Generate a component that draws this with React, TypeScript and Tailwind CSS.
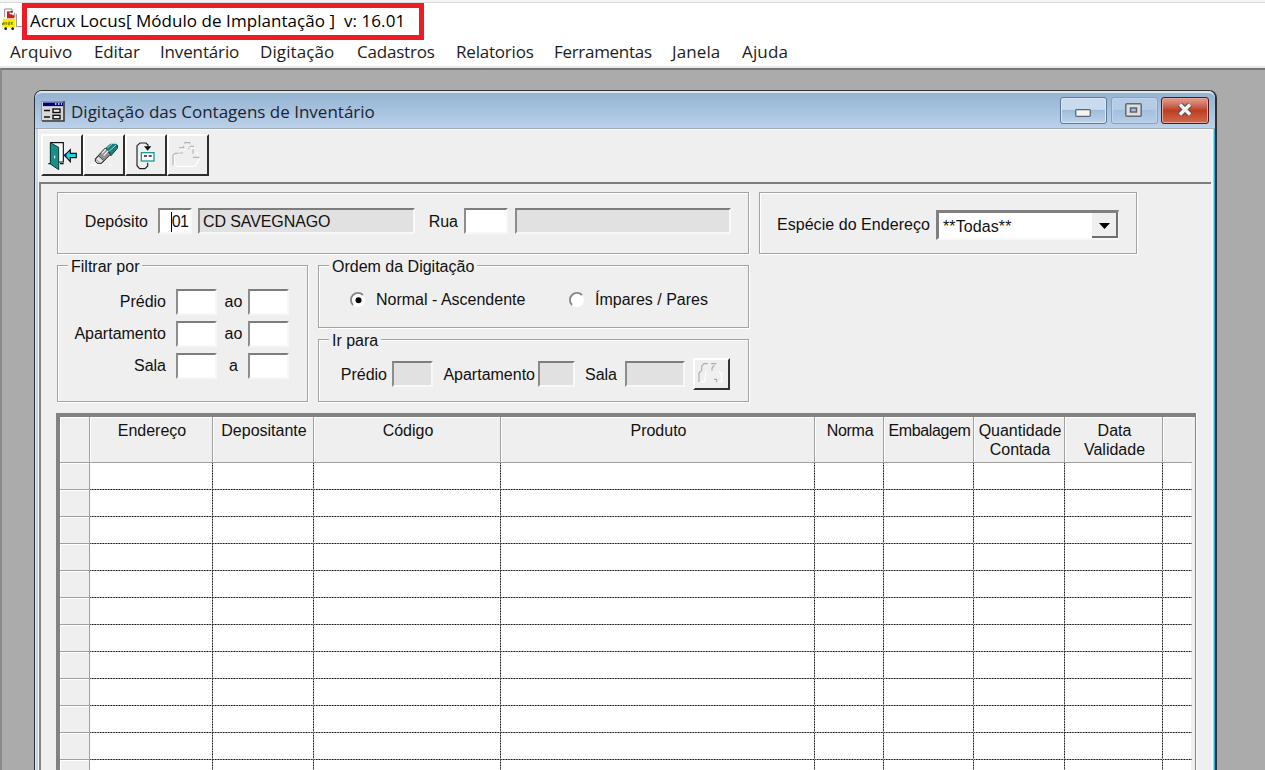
import type { ReactNode } from "react";

const menuItems = [
  { label: "Arquivo", className: "w-[84px] tracking-[0.1px]" },
  { label: "Editar", className: "w-[66px] tracking-[-0.15px]" },
  { label: "Inventário", className: "w-[100px] tracking-[-0.15px]" },
  { label: "Digitação", className: "w-[97px] tracking-[0.1px]" },
  { label: "Cadastros", className: "w-[99px] tracking-[-0.2px]" },
  { label: "Relatorios", className: "w-[98px] tracking-[-0.2px]" },
  { label: "Ferramentas", className: "w-[118px] tracking-[-0.3px]" },
  { label: "Janela", className: "w-[70px] tracking-[0.1px]" },
  { label: "Ajuda", className: "w-[60px] tracking-[0.15px]" },
];

const columns = [
  { name: "" },
  { name: "Endereço" },
  { name: "Depositante" },
  { name: "Código" },
  { name: "Produto" },
  { name: "Norma", className: "tracking-[-0.3px]" },
  { name: "Embalagem", className: "tracking-[-0.35px]" },
  { name: "Quantidade\nContada" },
  { name: "Data\nValidade" },
  { name: "" },
];
const gridTemplate = "grid grid-cols-[30px_123px_101px_187px_314px_69px_90px_91px_98px_29px]";
const rowCount = 12;

function AppIcon() {
  return (
    <svg className="h-6 w-5 shrink-0" viewBox="6 21 60 72">
      <path d="M14 52V27h22v10M40 44v10M49 42v38h17M44 38v14" fill="none" stroke="#8d8d93" strokeWidth="3" />
      <path d="M21 34h8v9h6l8 5v7H21z" fill="#e3141d" />
      <path d="M31 33h7v5h-7z" fill="#3a2020" />
      <path d="M9 56h36v26H7V66z" fill="#f7ef08" />
      <path d="M11 66v8M15 66v8M20 66v8M25 66h4v4h-4v4h5M34 66v8M39 66l-4 4 4 4" fill="none" stroke="#4b4708" strokeWidth="2" />
      <circle cx="17" cy="86" r="4" fill="#111" />
      <circle cx="38" cy="86" r="4" fill="#111" />
      <circle cx="8" cy="72" r="2" fill="#222" />
    </svg>
  );
}

function FormIcon() {
  return (
    <svg className="h-[21px] w-6 shrink-0" viewBox="0 0 24 21">
      <rect width="24" height="21" fill="#d9d9d9" />
      <path d="M23 0v20H1" fill="none" stroke="#333" strokeWidth="1.6" />
      <path d="M.5 20V.5H22" fill="none" stroke="#8a93a0" />
      <rect x="2" y="1.5" width="20" height="3.6" fill="#000080" />
      <path d="M14 3h1.500M17 3h1.500M20 3h1" stroke="#fff" strokeWidth="1.300" />
      <path d="M3 9.500h6M3 16h6" stroke="#111" strokeWidth="1.600" />
      <rect x="12" y="8" width="7" height="3.500" fill="#eee" stroke="#111" strokeWidth="1.400" />
      <rect x="12" y="14.300" width="7" height="3.500" fill="#eee" stroke="#111" strokeWidth="1.400" />
    </svg>
  );
}

function ToolButton({ children }: { children: ReactNode }) {
  return (
    <button className="h-[42px] w-[42px] border-2 border-t-white border-r-[#2e2e2e] border-b-[#2e2e2e] border-l-white bg-[#efefef]">
      {children}
    </button>
  );
}

function ExitIcon() {
  return (
    <svg className="h-[38px] w-[38px]" viewBox="39 153 114 114">
      <path d="M62 173h38v58H62z" fill="#fff" stroke="#111" strokeWidth="3.500" />
      <path d="M55 236h12M90 236h11" stroke="#111" strokeWidth="3.500" />
      <path d="M61 173l25 14v67l-25-17z" fill="#1d8d88" stroke="#063c3a" strokeWidth="3" />
      <path d="M74 212v8" stroke="#fff" strokeWidth="3" />
      <path d="M104 211l17-17v11h18v13h-18v12z" fill="#16d8e4" stroke="#111" strokeWidth="3.500" />
      <path d="M101 211l8-8v16z" fill="#10107c" />
    </svg>
  );
}

function EraserIcon() {
  return (
    <svg className="h-[38px] w-[38px]" viewBox="166 153 114 114">
      <path d="M182 240h28M238 239h8" stroke="#fff" strokeWidth="4" />
      <path d="M227 189l15-13h18l3 4v8l-21 25z" fill="#167f7c" />
      <path d="M233 189l14-12M239 198l20-18" stroke="#b9e6e4" strokeWidth="2.500" />
      <path d="M263 180v10l-20 23" fill="none" stroke="#0c2c2c" strokeWidth="3" />
      <path d="M197 221l30-32 15 19-26 27h-13l-6-6z" fill="#909090" stroke="#222" strokeWidth="3" />
      <path d="M216 206l13-14M222 212l14-15" stroke="#eee" strokeWidth="4" />
      <path d="M198 222l9-9 15 14-8 8h-10l-6-6z" fill="#e4e4e4" stroke="#333" strokeWidth="2.500" />
      <path d="M200 224l11 9" stroke="#777" strokeWidth="2" />
    </svg>
  );
}

function JumpIcon() {
  return (
    <svg className="h-[38px] w-[38px]" viewBox="293 153 114 114">
      <path d="M356 186v-6l-6-6h-18l-9 8v60l8 9h16l8-8v-10" fill="none" stroke="#222" strokeWidth="3.500" />
      <path d="M344 184h22l-11 13z" fill="#111" />
      <rect x="336" y="203" width="38" height="25" fill="#fff" stroke="#1c9a9a" strokeWidth="4" />
      <path d="M344 213h9M358 213h9" stroke="#222" strokeWidth="4" />
      <path d="M331 212v10" stroke="#fff" strokeWidth="3" />
    </svg>
  );
}

function DisabledIcon() {
  return (
    <svg className="h-[38px] w-[38px]" viewBox="418 153 114 114">
      <path d="M435 244v-34M453 193h13M484 190h10M502 200v10" fill="none" stroke="#fff" strokeWidth="3" />
      <path d="M438 244h58l14-22" fill="none" stroke="#fff" strokeWidth="4" />
      <path d="M430 241v-30l7-6h9M449 204h11M449 188h13v-6M463 175l4-2h13v3M480 184h13M490 193v13M490 217h19M477 188v5" fill="none" stroke="#b5b5b5" strokeWidth="3.500" />
    </svg>
  );
}

function Group({ title, className, children }: { title?: string; className: string; children: ReactNode }) {
  return (
    <section className={`relative border border-[#a3a3a3] shadow-[1px_1px_0_#fff,inset_1px_1px_0_#fff] ${className}`}>
      {title && <h2 className="absolute -top-[9px] left-[10px] bg-[#efefef] px-[3px] leading-[19px]">{title}</h2>}
      {children}
    </section>
  );
}

function Field({ className, disabled, children }: { className: string; disabled?: boolean; children?: ReactNode }) {
  return (
    <div
      className={`h-[26px] shrink-0 border-2 border-t-[#7d7d7d] border-r-[#f8f8f8] border-b-[#f8f8f8] border-l-[#8c8c8c] leading-[24px] ${disabled ? "bg-[#e1e1e1]" : "bg-white"} ${className}`}
    >
      {children}
    </div>
  );
}

function Radio({ checked }: { checked?: boolean }) {
  return (
    <svg className="size-4 shrink-0" viewBox="0 0 16 16">
      <circle cx="8" cy="8" r="7" fill="#fff" />
      <path d="M3 13A7 7 0 0 1 13 3" fill="none" stroke="#858585" strokeWidth="1.800" />
      {checked && <circle cx="8.500" cy="8.300" r="3" fill="#000" />}
    </svg>
  );
}

function FilterRow({ label, joiner }: { label: string; joiner: string }) {
  return (
    <div className="flex h-[26px] items-center">
      <span className="w-[118px] pr-[10px] text-right leading-[22px]">{label}</span>
      <Field className="w-[41px]" />
      <span className="w-[31px] pl-[2px] text-center leading-[22px]">{joiner}</span>
      <Field className="w-[41px]" />
    </div>
  );
}

function WindowButtons() {
  return (
    <div className="flex">
      <button className="mr-[4px] flex h-[27px] w-[47px] items-center justify-center rounded-[3px] border border-[#5d7897] bg-linear-to-b from-[#c9dcee] from-45% via-[#9fbddb] via-50% to-[#bcd3ea] pr-[2px] shadow-[inset_0_0_0_1px_#dce9f5]">
        <svg className="mt-[4px] h-2 w-4" viewBox="0 0 16 8">
          <rect x=".7" y=".7" width="14.600" height="6.600" rx="1" fill="#f3f3f3" stroke="#5d6670" strokeWidth="1.300" />
        </svg>
      </button>
      <button className="mr-[3px] flex h-[27px] w-[47px] items-center justify-center rounded-[3px] border border-[#86a2c0] bg-linear-to-b from-[#b4cce4] from-45% via-[#a3c0df] via-50% to-[#b5cee8] pr-[2px] shadow-[inset_0_0_0_1px_#bfd4ea]">
        <svg className="-mt-[2px] h-[14px] w-[17px]" viewBox="0 0 17 14">
          <rect x=".8" y=".8" width="15.400" height="12.400" rx="1" fill="#dedede" stroke="#626a72" strokeWidth="1.500" />
          <rect x="5.500" y="5" width="6" height="4" fill="#a7c1dc" stroke="#59636e" strokeWidth="1.500" />
        </svg>
      </button>
      <button className="flex h-[27px] w-[48px] items-center justify-center rounded-[3px] border border-[#54171a] bg-linear-to-b from-[#dd9082] from-10% via-[#bc3d22] via-50% to-[#cf6a4c] shadow-[inset_0_0_0_1px_#e6a899]">
        <svg className="-mt-[2px] h-[13px] w-4" viewBox="0 0 16 13">
          <path d="M3 1.500l10 10M13 1.500l-10 10" stroke="#55505a" strokeWidth="5.600" />
          <path d="M3 1.500l10 10M13 1.500l-10 10" stroke="#f4f4f4" strokeWidth="3.400" />
        </svg>
      </button>
    </div>
  );
}

function CountGrid() {
  return (
    <div className="-ml-px w-[1141px] shrink-0 overflow-hidden border-r border-white bg-[#efefef]">
      <div className="flex h-full flex-col border-t-[4px] border-r border-l-[4px] border-t-[#828282] border-r-[#858585] border-l-[#828282] pr-[4px]">
        <div className={`${gridTemplate} h-[46px] shrink-0 text-center leading-[19px]`}>
          {columns.map((column, i) => (
            <div
              key={i}
              className={`flex justify-center border-r border-b border-[#a0a0a0] pt-[4px] pl-[2px] whitespace-pre shadow-[inset_1px_1px_0_#fff] last:border-r-0 ${column.className ?? ""}`}
            >
              {column.name}
            </div>
          ))}
        </div>
        {Array.from({ length: rowCount }, (_, r) => (
          <div key={r} className={`${gridTemplate} h-[27px] shrink-0 bg-white`}>
            {columns.map((_, c) =>
              c === 0 ? (
                <div key={c} className="border-r border-b border-[#a0a0a0] bg-[#efefef] shadow-[inset_1px_1px_0_#fff]" />
              ) : (
                <div
                  key={c}
                  className={
                    c === columns.length - 1
                      ? "[background:repeating-linear-gradient(90deg,#000_0,#bbb_1.33px,#000_2.67px)_bottom/100%_1px_no-repeat]"
                      : "[background:repeating-linear-gradient(90deg,#000_0,#bbb_1.33px,#000_2.67px)_bottom/100%_1px_no-repeat,repeating-linear-gradient(180deg,#000_0,#bbb_1.33px,#000_2.67px)_right/1px_100%_no-repeat]"
                  }
                />
              ),
            )}
          </div>
        ))}
      </div>
    </div>
  );
}

export default function App() {
  return (
    <div className="flex h-[770px] w-[1265px] flex-col overflow-hidden bg-white font-['Liberation_Sans',sans-serif] text-[16px] text-[#111]">
      <div className="h-[3px] shrink-0 border-b border-[#d9dbde] bg-[#f3f4f6]" />
      <header className="flex h-[37px] shrink-0 font-['Open_Sans',sans-serif] text-[17px] text-black">
        <div className="w-[22px] pt-[4px] pl-[2px]">
          <AppIcon />
        </div>
        <h1 className="h-[37px] w-[402px] border-[5px] border-[#ed1c24] pl-[3px] leading-[26px] tracking-[0.05px] whitespace-pre">
          {"Acrux Locus[ Módulo de Implantação ]  v: 16.01"}
        </h1>
      </header>
      <nav className="flex h-[28px] shrink-0 border-b-2 border-[#e9e9e9] pl-[10px] font-['Open_Sans',sans-serif] text-[17px] leading-[24px] text-[#1c1c1c]">
        {menuItems.map((m) => (
          <span key={m.label} className={m.className}>
            {m.label}
          </span>
        ))}
      </nav>

      <main className="flex min-h-0 grow border-t-2 border-l-2 border-t-[#767676] border-l-[#8a8a8a] bg-[#ababab] pt-[20px] pl-[32px]">
        <div className="flex h-[690px] w-[1183px] flex-col rounded-t-[8px] border-t border-r-2 border-l border-[#2c3236] bg-[#b9d0e9]">
          <div className="flex h-[38px] shrink-0 rounded-t-[7px] border-t-2 border-b border-t-[#dce8ee] border-b-[#a2adb9] bg-linear-to-b from-[#94b3d2] to-[#bbd1ea] pr-[6px] pl-[6px]">
            <div className="pt-[8px]">
              <FormIcon />
            </div>
            <h2 className="grow pl-[6px] font-['Open_Sans',sans-serif] text-[17px] leading-[37px] text-[#1a2430]">Digitação das Contagens de Inventário</h2>
            <div className="pt-[4px]">
              <WindowButtons />
            </div>
          </div>

          <div className="flex min-h-0 grow border-r border-l border-r-[#22b2d8] border-l-[#d9e6f3]">
            <div className="flex min-h-0 grow flex-col border-r border-l-2 border-r-[#9bd5ee] border-l-[#c3d5e8]">
              <div className="flex min-h-0 grow flex-col border-r-2 border-l border-r-[#f3f7fa] border-l-[#f6f6f6] bg-[#efefef]">
                <div className="flex h-[53px] shrink-0 border-t border-[#fafafa] pt-[4px] pl-[2px]">
                  <ToolButton><ExitIcon /></ToolButton>
                  <ToolButton><EraserIcon /></ToolButton>
                  <ToolButton><JumpIcon /></ToolButton>
                  <ToolButton><DisabledIcon /></ToolButton>
                </div>

                <div className="flex min-h-0 grow flex-col border-t-2 border-l-2 border-t-[#7d7d7d] border-l-[#858585] pt-[8px] pl-[16px]">
                  <div className="flex shrink-0">
                    <Group className="flex h-[62px] w-[692px] pt-[15px]">
                      <span className="w-[100px] pr-[10px] text-right leading-[27px]">Depósito</span>
                      <Field className="w-[34px] pr-[2px] text-right">
                        <span className="inline-block border-l border-black leading-[20px] tracking-[-0.8px]">01</span>
                      </Field>
                      <Field className="ml-[6px] w-[217px] pl-[3px] tracking-[-0.1px]" disabled>CD SAVEGNAGO</Field>
                      <span className="w-[49px] pr-[6px] text-right leading-[27px]">Rua</span>
                      <Field className="w-[44px]" />
                      <Field className="ml-[7px] w-[216px]" disabled />
                    </Group>
                    <Group className="ml-[10px] flex h-[62px] w-[378px] pt-[17px]">
                      <span className="w-[176px] pr-[6px] text-right leading-[30px] tracking-[0.05px]">Espécie do Endereço</span>
                      <div className="flex h-[30px] w-[183px] border-t-[3px] border-r border-b-2 border-l-[3px] border-t-[#808080] border-r-[#f8f8f8] border-b-[#f8f8f8] border-l-[#808080] bg-white">
                        <span className="grow pl-[4px] leading-[27px] tracking-[0.1px]">**Todas**</span>
                        <div className="flex w-[26px] items-center justify-center border-r-2 border-b-2 border-[#707070] bg-[#efefef] pt-[3px]">
                          <svg className="h-[6px] w-[11px]" viewBox="0 0 11 6">
                            <path d="M0 0h11L5.500 6z" />
                          </svg>
                        </div>
                      </div>
                    </Group>
                  </div>

                  <div className="mt-[11px] flex shrink-0">
                    <Group title="Filtrar por" className="h-[137px] w-[251px] pt-[23px]">
                      <div className="flex flex-col gap-[6px]">
                        <FilterRow label="Prédio" joiner="ao" />
                        <FilterRow label="Apartamento" joiner="ao" />
                        <FilterRow label="Sala" joiner="a" />
                      </div>
                    </Group>
                    <div className="ml-[10px] flex w-[431px] flex-col gap-[11px]">
                      <Group title="Ordem da Digitação" className="flex h-[63px] items-center pt-[8px] pb-[1px] pl-[31px]">
                        <Radio checked />
                        <span className="w-[203px] pl-[10px]">Normal - Ascendente</span>
                        <Radio />
                        <span className="pl-[10px]">Ímpares / Pares</span>
                      </Group>
                      <Group title="Ir para" className="flex h-[63px] pt-[21px] leading-[27px]">
                        <span className="w-[73px] pr-[5px] text-right">Prédio</span>
                        <Field className="w-[41px]" disabled />
                        <span className="w-[105px] pr-[3px] text-right">Apartamento</span>
                        <Field className="w-[37px]" disabled />
                        <span className="w-[50px] pr-[8px] text-right">Sala</span>
                        <Field className="w-[60px]" disabled />
                        <button className="-mt-[3px] ml-[8px] h-[32px] w-[37px] border-2 border-t-white border-r-[#333] border-b-[#333] border-l-white">
                          <svg className="h-[28px] w-[33px]" viewBox="1157 540 99 84">
                            <path d="M1175 605h11l4-30M1229 574l8 8v24h-9" fill="none" stroke="#fff" strokeWidth="3.500" />
                            <path d="M1169 606v-27l8-8v-12l7-8h11M1205 551h16M1208 572v-8l7-8M1214 598h8v9" fill="none" stroke="#adadad" strokeWidth="3.500" />
                          </svg>
                        </button>
                      </Group>
                    </div>
                  </div>

                  <div className="mt-[11px] flex min-h-0 grow">
                    <CountGrid />
                  </div>
                </div>
              </div>
            </div>
          </div>
        </div>
      </main>
    </div>
  );
}
